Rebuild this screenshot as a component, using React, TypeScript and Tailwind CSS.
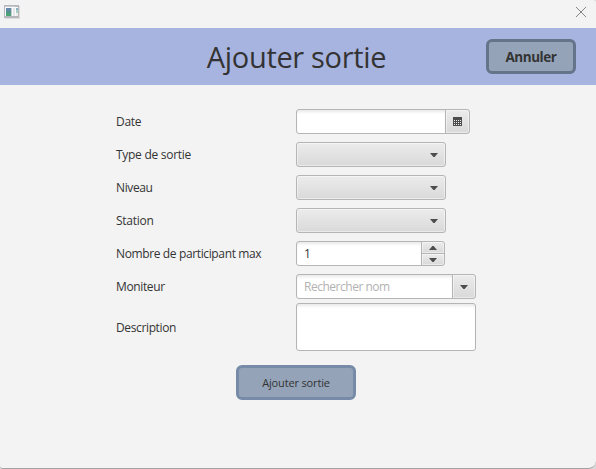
import type { ReactNode } from "react";

const face = "border border-[#b5b5b5] bg-linear-to-b from-[#ececec] to-[#d9d9d9] shadow-[inset_0_0_0_1px_rgba(255,255,255,0.45)]";
const field = "border border-[#b5b5b5] bg-white shadow-[inset_0_3px_3px_-1px_rgba(0,0,0,0.09)]";

function Arrow({ up = false }: { up?: boolean }) {
  return (
    <svg width="8" height="4" viewBox="0 0 8 4" className={up ? "rotate-180" : ""}>
      <path d="M0 0h8L4.6 4H3.4z" fill="#4d4d4d" />
    </svg>
  );
}

function Row({ label, spacing, children }: { label: string; spacing: string; children: ReactNode }) {
  return (
    <div className="flex h-[25px] items-center">
      <span className={`w-[180px] pt-px whitespace-nowrap ${spacing}`}>{label}</span>
      {children}
    </div>
  );
}

function Combo() {
  return (
    <div className={`flex h-[25px] w-[150px] items-center justify-end rounded-[3px] pt-[1px] pr-[7px] ${face}`}>
      <Arrow />
    </div>
  );
}

function WindowIcon() {
  return (
    <svg width="17" height="15" viewBox="0 0 17 15" shapeRendering="crispEdges">
      <path d="M1 1h15v13H1z" fill="#dcdcdc" />
      <path d="M0 0h15v13H0z" fill="#b4b8bc" />
      <path d="M1 2h13v9H1z" fill="#fafafa" />
      <path d="M1 1h10v1H1z" fill="#c9cdd0" />
      <path d="M2 3h5v3H2z" fill="#6589a8" />
      <path d="M2 6h5v2H2z" fill="#4f9290" />
      <path d="M2 8h5v3H2z" fill="#4ba376" />
      <path d="M7 3h1v8H7z" fill="#c3ced3" />
      <path d="M9 3h2v8H9z" fill="#e3e5e7" />
      <path d="M12 3h2v2h-2z" fill="#8fb0c4" />
      <path d="M12 5h2v3h-2z" fill="#a5d2bf" />
      <path d="M12 8h2v3h-2z" fill="#ededed" />
    </svg>
  );
}

function CalendarIcon() {
  return (
    <svg width="9" height="9" viewBox="0 0 9 9" shapeRendering="crispEdges">
      <path d="M0 0h9v9H0z" fill="#4d4d4d" />
      {[3, 5, 7].map((y) => [1, 3, 5, 7].map((x) => (
        <rect key={`${x}-${y}`} x={x} y={y} width="1" height="1" fill="#eeeeee" />
      )))}
    </svg>
  );
}

export default function App() {
  return (
    <div className="h-[469px] w-[596px] overflow-hidden bg-[#d8d8d8] font-['Open_Sans','Noto_Sans',sans-serif] text-[12px] text-[#333333]">
      <div className="flex h-[469px] flex-col rounded-tr-[3px] rounded-br-[8px] rounded-bl-[3px] border-b border-[#a3a3a3] bg-[#f3f3f3]">
        <div className="flex h-7 shrink-0 items-start justify-between pt-[5px] pr-[9px] pl-1">
          <WindowIcon />
          <svg width="12" height="12" viewBox="0 0 12 12" className="mt-[1px]">
            <path d="M1 1l10 10M11 1L1 11" stroke="#858585" strokeWidth="1" />
          </svg>
        </div>
        <header className="grid h-[57px] shrink-0 grid-cols-[1fr_auto_1fr] items-center bg-[#a8b4e0] pr-5">
          <h1 className="col-start-2 ml-[17px] text-[29px] leading-[40px] tracking-[-0.33px] whitespace-nowrap">Ajouter sortie</h1>
          <button className="h-[35px] w-[90px] justify-self-end rounded-[6px] border-3 border-[#64748b] bg-[#94a3b8] pt-px text-[13.5px] leading-5 font-bold tracking-[-0.45px]">
            Annuler
          </button>
        </header>

        <main className="flex flex-col gap-2 pt-6 pl-[116px]">
          <Row label="Date" spacing="tracking-[-0.3px]">
            <div className={`h-[25px] w-[150px] rounded-l-[3px] ${field}`} />
            <div className={`-ml-px flex h-[25px] w-[25px] items-center justify-center rounded-r-[3px] ${face}`}>
              <CalendarIcon />
            </div>
          </Row>
          <Row label="Type de sortie" spacing="tracking-[-0.28px]"><Combo /></Row>
          <Row label="Niveau" spacing="tracking-[-0.37px]"><Combo /></Row>
          <Row label="Station" spacing="tracking-[-0.25px]"><Combo /></Row>
          <Row label="Nombre de participant max" spacing="tracking-[-0.37px]">
            <div className={`flex h-[25px] w-[126px] items-center rounded-l-[3px] pt-px pl-[7px] ${field}`}>1</div>
            <div className="-ml-px flex h-[25px] w-6 flex-col">
              <div className={`flex h-[13px] items-center justify-center rounded-tr-[3px] ${face}`}><Arrow up /></div>
              <div className={`-mt-px flex h-[13px] items-center justify-center rounded-br-[3px] ${face}`}><Arrow /></div>
            </div>
          </Row>
          <Row label="Moniteur" spacing="tracking-[-0.37px]">
            <div className={`flex h-[25px] w-[157px] items-center rounded-l-[3px] pt-px pl-[7px] tracking-[-0.48px] text-[#b2b2b2] ${field}`}>
              Rechercher nom
            </div>
            <div className={`-ml-px flex h-[25px] w-6 items-center justify-center rounded-r-[3px] ${face}`}><Arrow /></div>
          </Row>
          <div className="-mt-1 flex h-12 items-center">
            <span className="w-[180px] pt-0.5 tracking-[-0.37px]">Description</span>
            <div className={`h-12 w-[180px] rounded-[3px] ${field}`} />
          </div>
        </main>

        <button className="mt-[14px] ml-[236px] h-[35px] w-[120px] rounded-[6px] border-3 border-[#778ba8] bg-[#94a3b8] pt-0.5 text-[11px] tracking-[-0.15px]">
          Ajouter sortie
        </button>
      </div>
    </div>
  );
}
